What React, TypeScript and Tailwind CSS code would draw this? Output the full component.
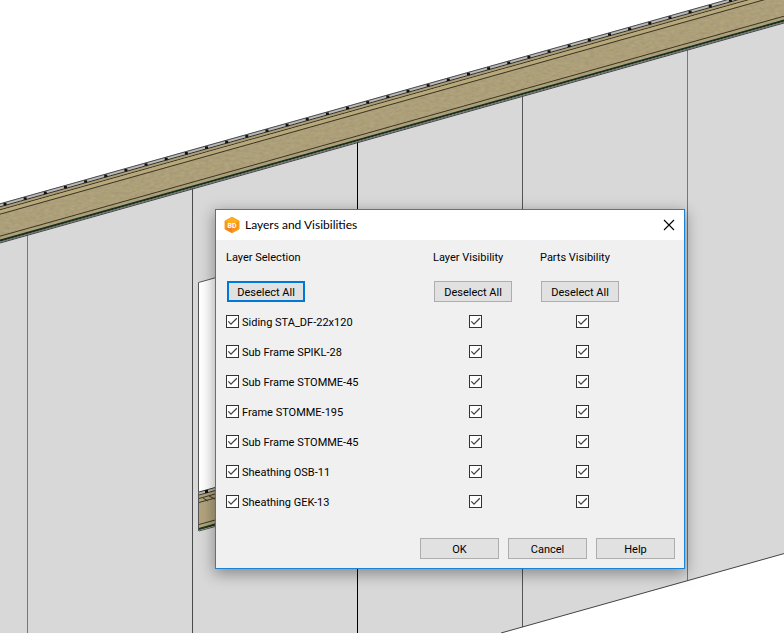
import { useState } from 'react';

const layers = [
  'Siding STA_DF-22x120',
  'Sub Frame SPIKL-28',
  'Sub Frame STOMME-45',
  'Frame STOMME-195',
  'Sub Frame STOMME-45',
  'Sheathing OSB-11',
  'Sheathing GEK-13',
];

const columns = ['Layer Selection', 'Layer Visibility', 'Parts Visibility'];

const SLOPE = 0.2806;

/* A line parallel to the roof, given by its height at the left edge. */
function RoofLine({ y, color, width = 1 }: { y: number; color: string; width?: number }) {
  return <line x1="-10" y1={y + 10 * SLOPE} x2="1600" y2={y - 1600 * SLOPE} stroke={color} strokeWidth={width} />;
}

function WallDrawing() {
  const panelLines = [
    { x: 27.5, color: '#777' },
    { x: 192.5, color: '#4a4a4a' },
    { x: 357.5, color: '#000' },
    { x: 522.5, color: '#555' },
    { x: 687.5, color: '#777' },
  ];
  const battens = Array.from({ length: 38 }, (_, i) => 5 + i * 20.15);
  return (
    <svg className="absolute left-0 top-0 h-[633px] w-[1600px] max-w-none" viewBox="0 0 1600 633" aria-hidden="true">
      <defs>
        <filter id="grain" x="0" y="0" width="100%" height="100%" colorInterpolationFilters="sRGB">
          <feTurbulence type="fractalNoise" baseFrequency="0.2 0.4" numOctaves="2" result="noise" />
          <feColorMatrix
            in="noise"
            values="0 0 0 0 0.48  0 0 0 0 0.43  0 0 0 0 0.32  0.4 0 0 0 -0.04"
            result="tint"
          />
          <feComposite in="tint" in2="SourceGraphic" operator="in" result="cut" />
          <feMerge>
            <feMergeNode in="SourceGraphic" />
            <feMergeNode in="cut" />
          </feMerge>
        </filter>
      </defs>
      <polygon points="0,240 1600,-209 1600,324.4 501,633 0,633" fill="#d8d8d8" />
      {panelLines.map(({ x, color }) => (
        <line key={x} x1={x} x2={x} y1={242 - x * SLOPE} y2={Math.min(633, 773.6 - x * SLOPE)} stroke={color} />
      ))}
      <line x1="501" y1="633" x2="1600" y2="324.6" stroke="#444" />

      <polygon points="0,207 1600,-242 1600,-208 0,241" fill="#b6a981" filter="url(#grain)" />
      <RoofLine y={205} color="#b9b9bb" width={3} />
      <RoofLine y={203.8} color="#4c4c4c" />
      <RoofLine y={206.8} color="#2c2a20" />
      <RoofLine y={209.8} color="#3c3526" />
      <RoofLine y={212} color="#b8a97b" width={3} />
      <RoofLine y={214.2} color="#3c3526" />
      <RoofLine y={236.2} color="#3c3526" />
      <RoofLine y={240.6} color="#16301a" width={2} />
      <RoofLine y={242} color="#6d6d6d" />
      <RoofLine y={243} color="#444" />
      {battens.map((x) => (
        <rect key={x} x={x - 1.5} y={204.3 - x * SLOPE} width="3" height="2.5" fill="#111" />
      ))}

      <polygon points="198.5,282.5 260,265.2 260,475 198.5,492" fill="#fff" />
      <path d="M198.5 531V282.5L260 265.2" fill="none" stroke="#555" />
      <polygon points="199,493 260,476 260,513 199,530" fill="#b1a47d" />
      <path d="M199 493.5l61-17" stroke="#b9b9bb" strokeWidth="3" />
      <path d="M199 492l61-17M199 495l61-17M199 498.5l61-17M199 502.5l61-17M199 524.5l61-17" stroke="#3d3828" fill="none" />
      <path d="M203 498l5 3M209 496l6 3" stroke="#3d3828" />
      <path d="M199 529l61-17" stroke="#1c3a1c" strokeWidth="2" />
      <path d="M199 531l61-17" stroke="#555" />
      <rect x="205" y="490" width="3" height="3" fill="#111" />
    </svg>
  );
}

function CheckBox({ id, label, checked, onChange }: { id: string; label?: string; checked: boolean; onChange: () => void }) {
  return (
    <span className="relative block size-[13px] shrink-0">
      <input
        id={id}
        type="checkbox"
        aria-label={label}
        checked={checked}
        onChange={onChange}
        className="block size-[13px] appearance-none border border-[#333] bg-white"
      />
      {checked && (
        <svg className="pointer-events-none absolute left-0 top-0 size-[13px]" viewBox="0 0 13 13" aria-hidden="true">
          <path d="M2.3 6.4L5 9.1L10.8 3.3" fill="none" stroke="#444" strokeWidth="1.3" />
        </svg>
      )}
    </span>
  );
}

export default function App() {
  const [checks, setChecks] = useState(layers.map(() => [true, true, true]));
  const toggle = (row: number, col: number) =>
    setChecks(checks.map((r, i) => (i === row ? r.map((v, j) => (j === col ? !v : v)) : r)));
  const clear = (col: number) => setChecks(checks.map((r) => r.map((v, j) => (j === col ? false : v))));

  return (
    <main className="relative h-screen w-full overflow-hidden bg-white font-['Roboto',sans-serif] text-[11px] text-black">
      <WallDrawing />
      <section
        role="dialog"
        aria-labelledby="dialog-title"
        className="absolute left-[215px] top-[209px] w-[470px] border border-[#1883d7] bg-[#f0f0f0] shadow-[0_4px_14px_1px_rgba(0,0,0,0.36)]"
      >
        <header className="flex h-[30px] items-center bg-white pl-2 pr-[9px]">
          <svg className="size-4" viewBox="0 0 16 16" aria-hidden="true">
            <polygon points="8,0.2 15,4 15,12 8,15.8 1,12 1,4" fill="#f7941d" stroke="#f9a01e" strokeLinejoin="round" />
            <polygon points="8,0.2 15,4 8,8 1,4" fill="#fbb018" />
            <polygon points="1,12 8,8 8,15.8" fill="#f58220" />
            <text x="8" y="10.6" textAnchor="middle" fontSize="7" fontWeight="700" fill="#fff">BD</text>
          </svg>
          <h1 id="dialog-title" className="ml-[5px] flex-1 font-['Lato',sans-serif] text-[12px] leading-4">
            Layers and Visibilities
          </h1>
          <button type="button" aria-label="Close" className="flex size-3 items-center justify-center">
            <svg className="size-3" viewBox="0 0 12 12" aria-hidden="true">
              <path d="M1 1L11 11M11 1L1 11" stroke="#000" strokeWidth="1.1" />
            </svg>
          </button>
        </header>

        <table className="ml-[10px] table-fixed border-collapse">
          <colgroup>
            <col className="w-[207px]" />
            <col className="w-[107px]" />
            <col className="w-[107px]" />
          </colgroup>
          <thead>
            <tr className="h-[35px]">
              {columns.map((name) => (
                <th key={name} scope="col" className="p-0 pt-[10px] text-left align-top font-normal leading-4">
                  {name}
                </th>
              ))}
            </tr>
            <tr className="h-8">
              {columns.map((name, col) => (
                <td key={name} className="p-0 pl-px pt-[6px] align-top">
                  <button
                    type="button"
                    aria-label={`Deselect All, ${name}`}
                    onClick={() => clear(col)}
                    className={`flex h-[21px] w-[78px] items-center justify-center bg-[#e1e1e1] pt-[2px] leading-4 ${
                      col === 0 ? 'border-2 border-[#0078d7]' : 'border border-[#adadad]'
                    }`}
                  >
                    Deselect All
                  </button>
                </td>
              ))}
            </tr>
          </thead>
          <tbody>
            {layers.map((name, row) => (
              <tr key={row} className="h-[30px]">
                <td className="p-0 pt-2 align-top">
                  <div className="flex h-[13px] items-start gap-[3px]">
                    <CheckBox id={`layer-${row}`} checked={checks[row][0]} onChange={() => toggle(row, 0)} />
                    <label htmlFor={`layer-${row}`} className="whitespace-nowrap leading-4">
                      {name}
                    </label>
                  </div>
                </td>
                {[1, 2].map((col) => (
                  <td key={col} className="p-0 pl-9 pt-2 align-top">
                    <CheckBox
                      id={`cell-${row}-${col}`}
                      label={`${columns[col]}, ${name}`}
                      checked={checks[row][col]}
                      onChange={() => toggle(row, col)}
                    />
                  </td>
                ))}
              </tr>
            ))}
          </tbody>
        </table>

        <footer className="flex justify-end gap-[9px] pb-[9px] pr-[9px] pt-[21px]">
          {['OK', 'Cancel', 'Help'].map((name) => (
            <button
              key={name}
              type="button"
              className="flex h-[21px] w-[79px] items-center justify-center border border-[#adadad] bg-[#e1e1e1] pt-[2px] leading-4"
            >
              {name}
            </button>
          ))}
        </footer>
      </section>
    </main>
  );
}
